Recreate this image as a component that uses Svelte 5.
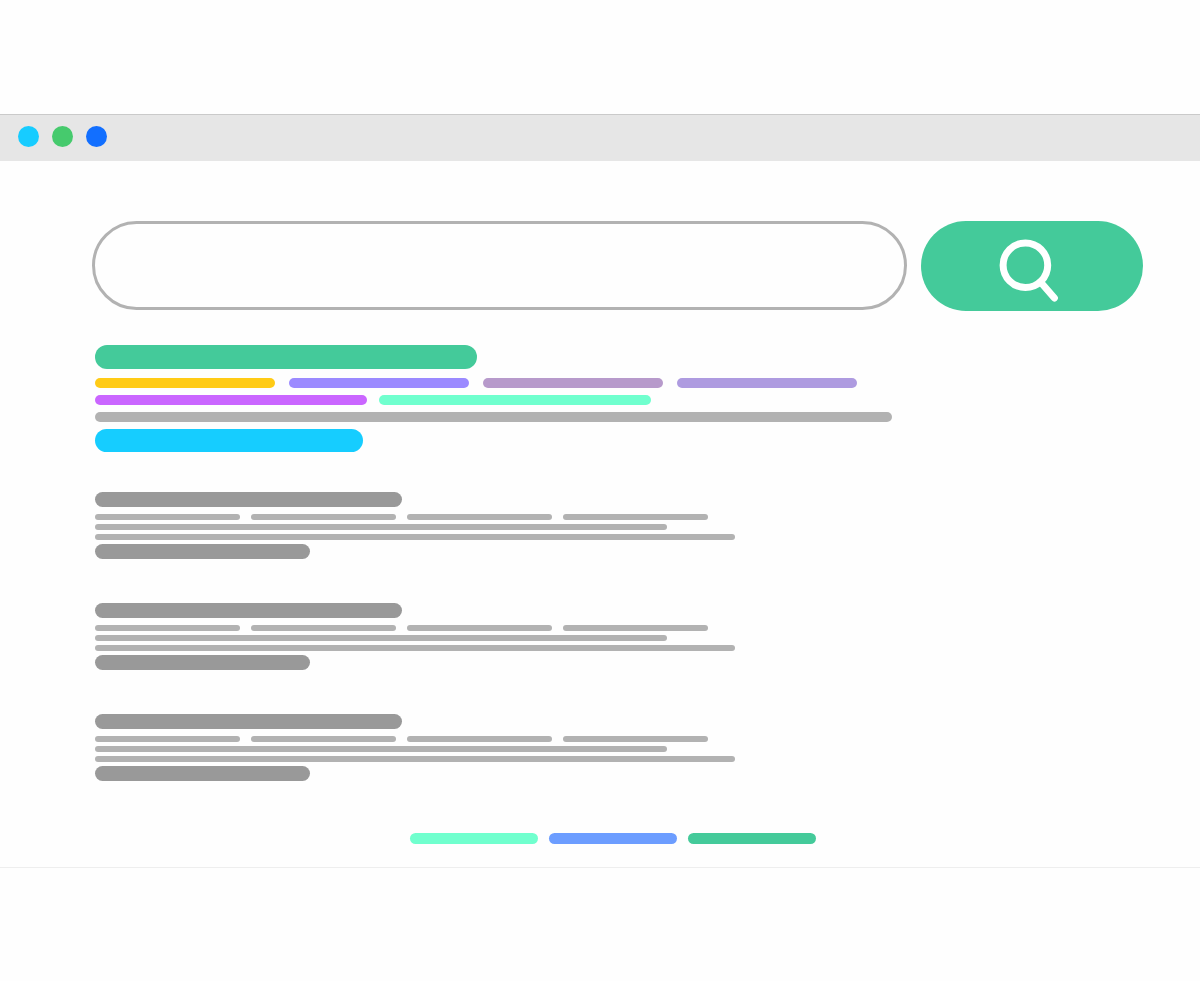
<script lang="ts">
  type Bar = { width: number; color?: string };
  type Result = { rows: Bar[][]; featured?: boolean };

  const dots = ['#17ccff', '#46ca6d', '#126fff'];

  const plain: Result = {
    rows: [
      [{ width: 307 }],
      [{ width: 145 }, { width: 145 }, { width: 145 }, { width: 145 }],
      [{ width: 572 }],
      [{ width: 640 }],
      [{ width: 215 }],
    ],
  };

  const results: Result[] = [
    {
      featured: true,
      rows: [
        [{ width: 382, color: '#44ca9a' }],
        [
          { width: 180, color: '#ffcb16' },
          { width: 180, color: '#9b8aff' },
          { width: 180, color: '#b79acb' },
          { width: 180, color: '#ae9be0' },
        ],
        [
          { width: 272, color: '#ca66ff' },
          { width: 272, color: '#70ffce' },
        ],
        [{ width: 797, color: '#b2b2b2' }],
        [{ width: 268, color: '#16cdff' }],
      ],
    },
    plain,
    plain,
    plain,
  ];

  const pages = ['#70ffce', '#6c9dff', '#44ca9a'];

  let query = $state('');
</script>

<div class="browser">
  <header class="titlebar">
    {#each dots as color}
      <span class="dot" style:background={color}></span>
    {/each}
  </header>

  <main>
    <form class="search" onsubmit={(e) => e.preventDefault()}>
      <input type="text" aria-label="Search" bind:value={query} />
      <button type="submit" aria-label="Search">
        <svg viewBox="0 0 66 72" fill="none" stroke="#fff" stroke-width="7" stroke-linecap="round">
          <circle cx="26.4" cy="35.2" r="22.3" />
          <path d="M41.5 52L55.4 68" />
        </svg>
      </button>
    </form>

    <div class="content">
      {#each results as result}
        <article class="result" class:featured={result.featured}>
          {#each result.rows as row}
            <div class="row">
              {#each row as bar}
                <span class="bar" style:width="{bar.width}px" style:background={bar.color}></span>
              {/each}
            </div>
          {/each}
        </article>
      {/each}

      <nav class="pager" aria-label="Pages">
        {#each pages as color, i}
          <button type="button" aria-label="Page {i + 1}" style:background={color}></button>
        {/each}
      </nav>
    </div>
  </main>
</div>

<style>
  :global(body) {
    background: #fefefe;
    font-family: "Liberation Sans", sans-serif;
  }
  .browser {
    margin: 114px 0;
    border-top: 1px solid #cacaca;
    border-bottom: 1px solid #eee;
  }
  .titlebar {
    display: flex;
    gap: 13px;
    padding: 11px 18px 14px;
    background: #e6e6e6;
  }
  .dot { width: 21px; height: 21px; border-radius: 50%; }
  main { padding: 60px 57px 23px 92px; }
  .search {
    display: grid;
    grid-template-columns: minmax(0, 1fr) 222px;
    gap: 14px;
    margin-bottom: 34px;
  }
  .search input {
    box-sizing: border-box;
    width: 100%;
    height: 89px;
    padding: 0 40px;
    border: 3px solid #b2b2b2;
    border-radius: 45px;
    background: transparent;
    font: inherit;
    font-size: 28px;
    outline: none;
  }
  .search button {
    display: flex;
    align-items: center;
    justify-content: center;
    height: 90px;
    padding: 0;
    border: 0;
    border-radius: 45px;
    background: #44ca9a;
    cursor: pointer;
  }
  .search svg { width: 66px; height: 72px; }
  .content { padding: 0 12px 0 3px; }
  .result {
    display: flex;
    flex-direction: column;
    gap: 4px;
    margin-bottom: 44px;
  }
  .row { display: flex; gap: 11px; }
  .row:first-child { margin-bottom: 3px; }
  .bar {
    height: 6px;
    border-radius: 12px;
    background: #b2b2b2;
  }
  .row:first-child .bar,
  .row:last-child .bar { height: 15px; background: #999; }

  .featured { gap: 7px; margin-bottom: 40px; }
  .featured .row { gap: 14px; }
  .featured .row:nth-child(3) { gap: 12px; }
  .featured .row:first-child { margin-bottom: 2px; }
  .featured .bar { height: 10px; }
  .featured .row:first-child .bar { height: 24px; }
  .featured .row:last-child .bar { height: 23px; }

  .pager {
    display: flex;
    justify-content: center;
    gap: 11px;
    padding-top: 8px;
  }
  .pager button {
    width: 128px;
    height: 11px;
    padding: 0;
    border: 0;
    border-radius: 6px;
    cursor: pointer;
  }
</style>
